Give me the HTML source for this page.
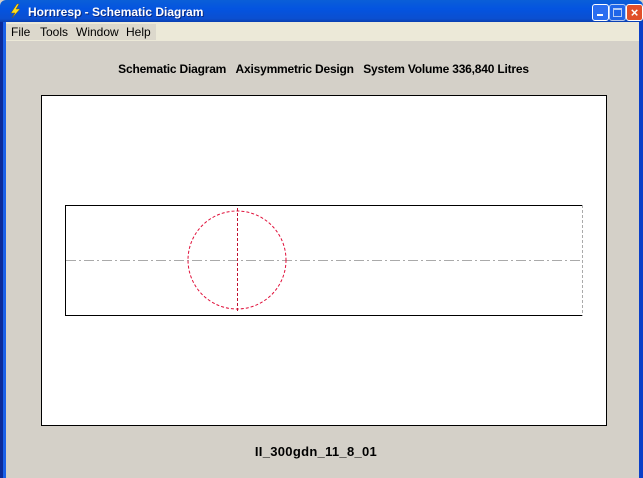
<!DOCTYPE html>
<html><head><style>
body{margin:0;width:643px;height:478px;overflow:hidden;background:#d4d0c8;font-family:"Liberation Sans",sans-serif;position:relative}
.title{position:absolute;left:0;top:0;width:643px;height:22px;background:linear-gradient(#0a5fd8,#0454e0 40%,#0b4fd0 85%,#0a3fb0);border-radius:6px 6px 0 0}
.title span{position:absolute;left:28px;top:5px;color:#fff;font-weight:bold;font-size:12px;text-shadow:1px 1px #0a2a80}
.lb{position:absolute;left:0;top:22px;width:3px;height:456px;background:#0a2a9a}
.lb2{position:absolute;left:3px;top:22px;width:3px;height:456px;background:#1a60e8}
.rb{position:absolute;right:0;top:22px;width:4px;height:456px;background:#0a3fc8}
.menu{position:absolute;left:6px;top:22px;width:633px;height:19px;background:#ece9d8;font-size:12px}
.menu span{position:absolute;top:2px;padding:1px 5px;background:#dcd8cc}
.btn{position:absolute;top:4px;width:15px;height:15px;border:1px solid #fff;border-radius:3px;background:#2a6ef0}
.cap{position:absolute;top:62px;left:0;width:643px;text-align:center;font-size:12px;font-weight:bold;word-spacing:0px;letter-spacing:-0.2px;padding-left:2px}
.foot{position:absolute;top:444px;left:0;width:632px;text-align:center;font-size:13px;font-weight:bold;letter-spacing:0.3px}
</style></head><body>
<div class="title"><svg style="position:absolute;left:8px;top:3px" width="14" height="16"><path d="M9 1 L3 10 L7 10 L4 15 L12 6 L8 6 L11 1Z" fill="#ffe020" stroke="#806000" stroke-width=".5"/></svg><span>Hornresp - Schematic Diagram</span>
<div class="btn" style="left:592px"><div style="position:absolute;left:4px;top:9px;width:6px;height:2px;background:#fff"></div></div>
<div class="btn" style="left:609px;opacity:.7"><div style="position:absolute;left:3px;top:3px;width:7px;height:6px;border:1px solid #fff;border-top-width:2px"></div></div>
<div class="btn" style="left:626px;background:#e0502a;color:#fff;font-size:13px;font-weight:bold;text-align:center;line-height:15px">×</div>
</div>
<div class="lb"></div><div class="lb2"></div><div class="rb"></div>
<div class="menu"><span style="left:0">File</span><span style="left:29px">Tools</span><span style="left:65px">Window</span><span style="left:115px">Help</span></div>
<div class="cap">Schematic Diagram &nbsp;&nbsp;Axisymmetric Design &nbsp;&nbsp;System Volume 336,840 Litres</div>
<svg style="position:absolute;left:0;top:0" width="643" height="478">
<rect x="41.5" y="95.5" width="565" height="330" fill="#fff" stroke="#000"/>
<path d="M582 205.5H65.5V315.5H582" fill="none" stroke="#000"/>
<path d="M582.5 205V316" stroke="#aaa" stroke-dasharray="3 2"/>
<path d="M66 260.5H582" stroke="#aaa" stroke-dasharray="10 3 2 3"/>
<circle cx="237" cy="260" r="49" fill="none" stroke="#e0103a" stroke-dasharray="3 2"/>
<path d="M237.5 208V313" stroke="#c01030" stroke-dasharray="3 2"/>
</svg>
<div class="foot">II_300gdn_11_8_01</div>
</body></html>
